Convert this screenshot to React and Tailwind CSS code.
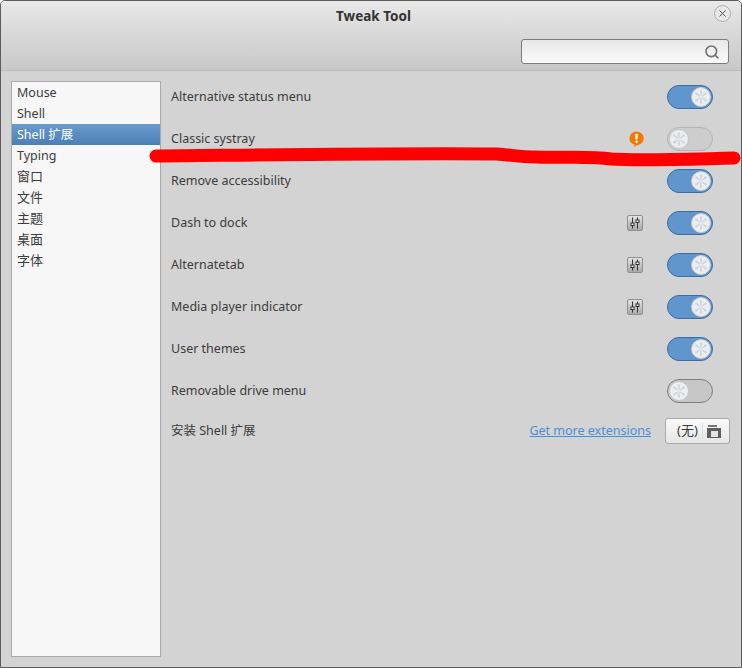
import { Search, X } from "lucide-react";

const menu = ["Mouse", "Shell", "Shell 扩展", "Typing", "窗口", "文件", "主题", "桌面", "字体"];

const rows = [
  { label: "Alternative status menu", on: true },
  { label: "Classic systray", on: false, warn: true, dim: true },
  { label: "Remove accessibility", on: true },
  { label: "Dash to dock", on: true, prefs: true },
  { label: "Alternatetab", on: true, prefs: true },
  { label: "Media player indicator", on: true, prefs: true },
  { label: "User themes", on: true },
  { label: "Removable drive menu", on: false },
];

function Knob() {
  return (
    <span className="w-[20px] h-[20px] rounded-full bg-[#eceef0] border border-[#c4c8cc] flex items-center justify-center shrink-0">
      <svg width="14" height="14" viewBox="0 0 14 14" fill="#ccd5dd">
        <path d="M5.8 0.5h2.4L7.4 6h-.8z" />
        <path d="M5.8 13.5h2.4L7.4 8h-.8z" />
        <path d="M0.9 4l1.2-2L6.4 6l-.4.7z" />
        <path d="M13.1 10l-1.2 2L7.6 8l.4-.7z" />
        <path d="M13.1 4l-1.2-2L7.6 6l.4.7z" />
        <path d="M0.9 10l1.2 2L6.4 8l-.4-.7z" />
      </svg>
    </span>
  );
}

function Switch({ on, dim }) {
  if (on) {
    return (
      <div className="w-[46px] h-[24px] rounded-full bg-[#6096cb] border border-[#3a6ea5] flex items-center justify-end pr-[1px]">
        <Knob />
      </div>
    );
  }
  return (
    <div className={`w-[46px] h-[24px] rounded-full flex items-center pl-[1px] border ${dim ? "bg-[#cdcdcd] border-[#b4b4b4]" : "bg-[#c6c6c6] border-[#7f7f7f]"}`}>
      <Knob />
    </div>
  );
}

function PrefsIcon() {
  return (
    <div className="w-[16px] h-[16px] rounded-[2px] bg-gradient-to-b from-[#e4e4e4] to-[#a8a8a8] border border-[#8f8f8f] flex items-center justify-center">
      <svg width="12" height="12" viewBox="0 0 12 12" fill="none" stroke="#333" strokeWidth="1">
        <path d="M3.5 0.5v11M8.5 0.5v11" />
        <rect x="2" y="6" width="3" height="2.5" fill="#fff" />
        <rect x="7" y="3" width="3" height="2.5" fill="#fff" />
      </svg>
    </div>
  );
}

function WarnIcon() {
  return (
    <svg width="17" height="16" viewBox="0 0 17 16">
      <path d="M8.5 0.5a7.5 6.8 0 0 1 1.6 13.4c-1.2.3-3.2 1.4-4.6 1.9.5-.8.9-1.7 1-2.1A7.5 6.8 0 0 1 8.5.5z" fill="#f57900" />
      <rect x="7.4" y="2.7" width="2.3" height="5.8" rx="0.8" fill="#fff" />
      <rect x="7.4" y="9.6" width="2.3" height="2.3" rx="0.8" fill="#fff" />
    </svg>
  );
}

export default function App() {
  return (
    <div className="relative w-[742px] h-[668px] bg-[#d3d3d3] border border-[#5c5c5c] rounded-t-[5px] overflow-hidden flex flex-col text-[12.5px] text-[#3c3c3c] font-['Noto_Sans','Noto_Sans_CJK_SC',sans-serif]">
      <header className="relative h-[70px] shrink-0 bg-gradient-to-b from-[#e8e8e8] to-[#c8c8c8] border-b border-[#bdbdbd]">
        <h1 className="text-center font-bold text-[13.5px] text-[#333] leading-[30px] pl-[5px]">Tweak Tool</h1>
        <button className="absolute right-[10px] top-[4px] w-[17px] h-[17px] rounded-full bg-[#e8e8e8] border border-[#adadad] flex items-center justify-center">
          <X size={11} strokeWidth={2} color="#444" />
        </button>
        <div className="absolute left-[520px] top-[38px] w-[208px] h-[25px] rounded-[3px] border border-[#7d7d7d] bg-gradient-to-b from-[#e8e8e8] to-[#fafafa] flex items-center justify-end pr-[8px]">
          <Search size={16} strokeWidth={2.4} color="#707070" />
        </div>
      </header>

      <div className="flex-1 flex pl-[10px] pr-[11px] pt-[5px] pb-[10px] gap-[10px]">
        <nav className="w-[150px] mt-[5px] bg-[#f7f7f7] border border-[#a9a9a9]">
          {menu.map((item, i) => (
            <div
              key={item}
              className={`h-[21px] leading-[21px] pl-[5px] ${i >= 4 ? "text-[13px]" : ""} ${i === 2 ? "bg-gradient-to-b from-[#6b9bcf] to-[#4a7fb5] text-white" : ""}`}
            >
              {item}
            </div>
          ))}
        </nav>

        <main className="flex-1">
          {rows.map((r) => (
            <div key={r.label} className="h-[42px] flex items-center pr-[17px]">
              <span className="flex-1">{r.label}</span>
              {r.warn && <div className="mr-[22px]"><WarnIcon /></div>}
              {r.prefs && <div className="mr-[24px]"><PrefsIcon /></div>}
              <Switch on={r.on} dim={r.dim} />
            </div>
          ))}
          <div className="h-[38px] flex items-center">
            <span className="flex-1">安装 Shell 扩展</span>
            <a className="text-[#4a90d9] underline mr-[14px]">Get more extensions</a>
            <button className="w-[65px] h-[26px] rounded-[3px] border border-[#a8a8a8] bg-gradient-to-b from-[#fafafa] to-[#e6e6e6] flex items-center pl-[11px]">
              <span className="text-[13px]">(无)</span>
              <span className="w-px h-[16px] bg-[#dcdcdc] ml-[4px] mr-[4px]"></span>
              <svg width="14" height="15" viewBox="0 0 14 15">
                <path d="M1 1h9v2H1z" fill="#777" />
                <path d="M0 4h14v10H0z" fill="#5f5f5f" />
                <path d="M4 7h7v6H4z" fill="#e4e4e4" />
              </svg>
            </button>
          </div>
        </main>
      </div>

      {/* red scribble over the window */}
      <svg className="absolute left-0 top-0 pointer-events-none blur-[0.7px]" width="742" height="668" fill="none">
        <path
          d="M155 155 C260 154 400 152 495 153 C510 154 520 156 535 156 C570 157 590 155 610 158 C640 160 690 158 733 157"
          stroke="#ff0000"
          strokeWidth="13"
          strokeLinecap="round"
        />
      </svg>
    </div>
  );
}
